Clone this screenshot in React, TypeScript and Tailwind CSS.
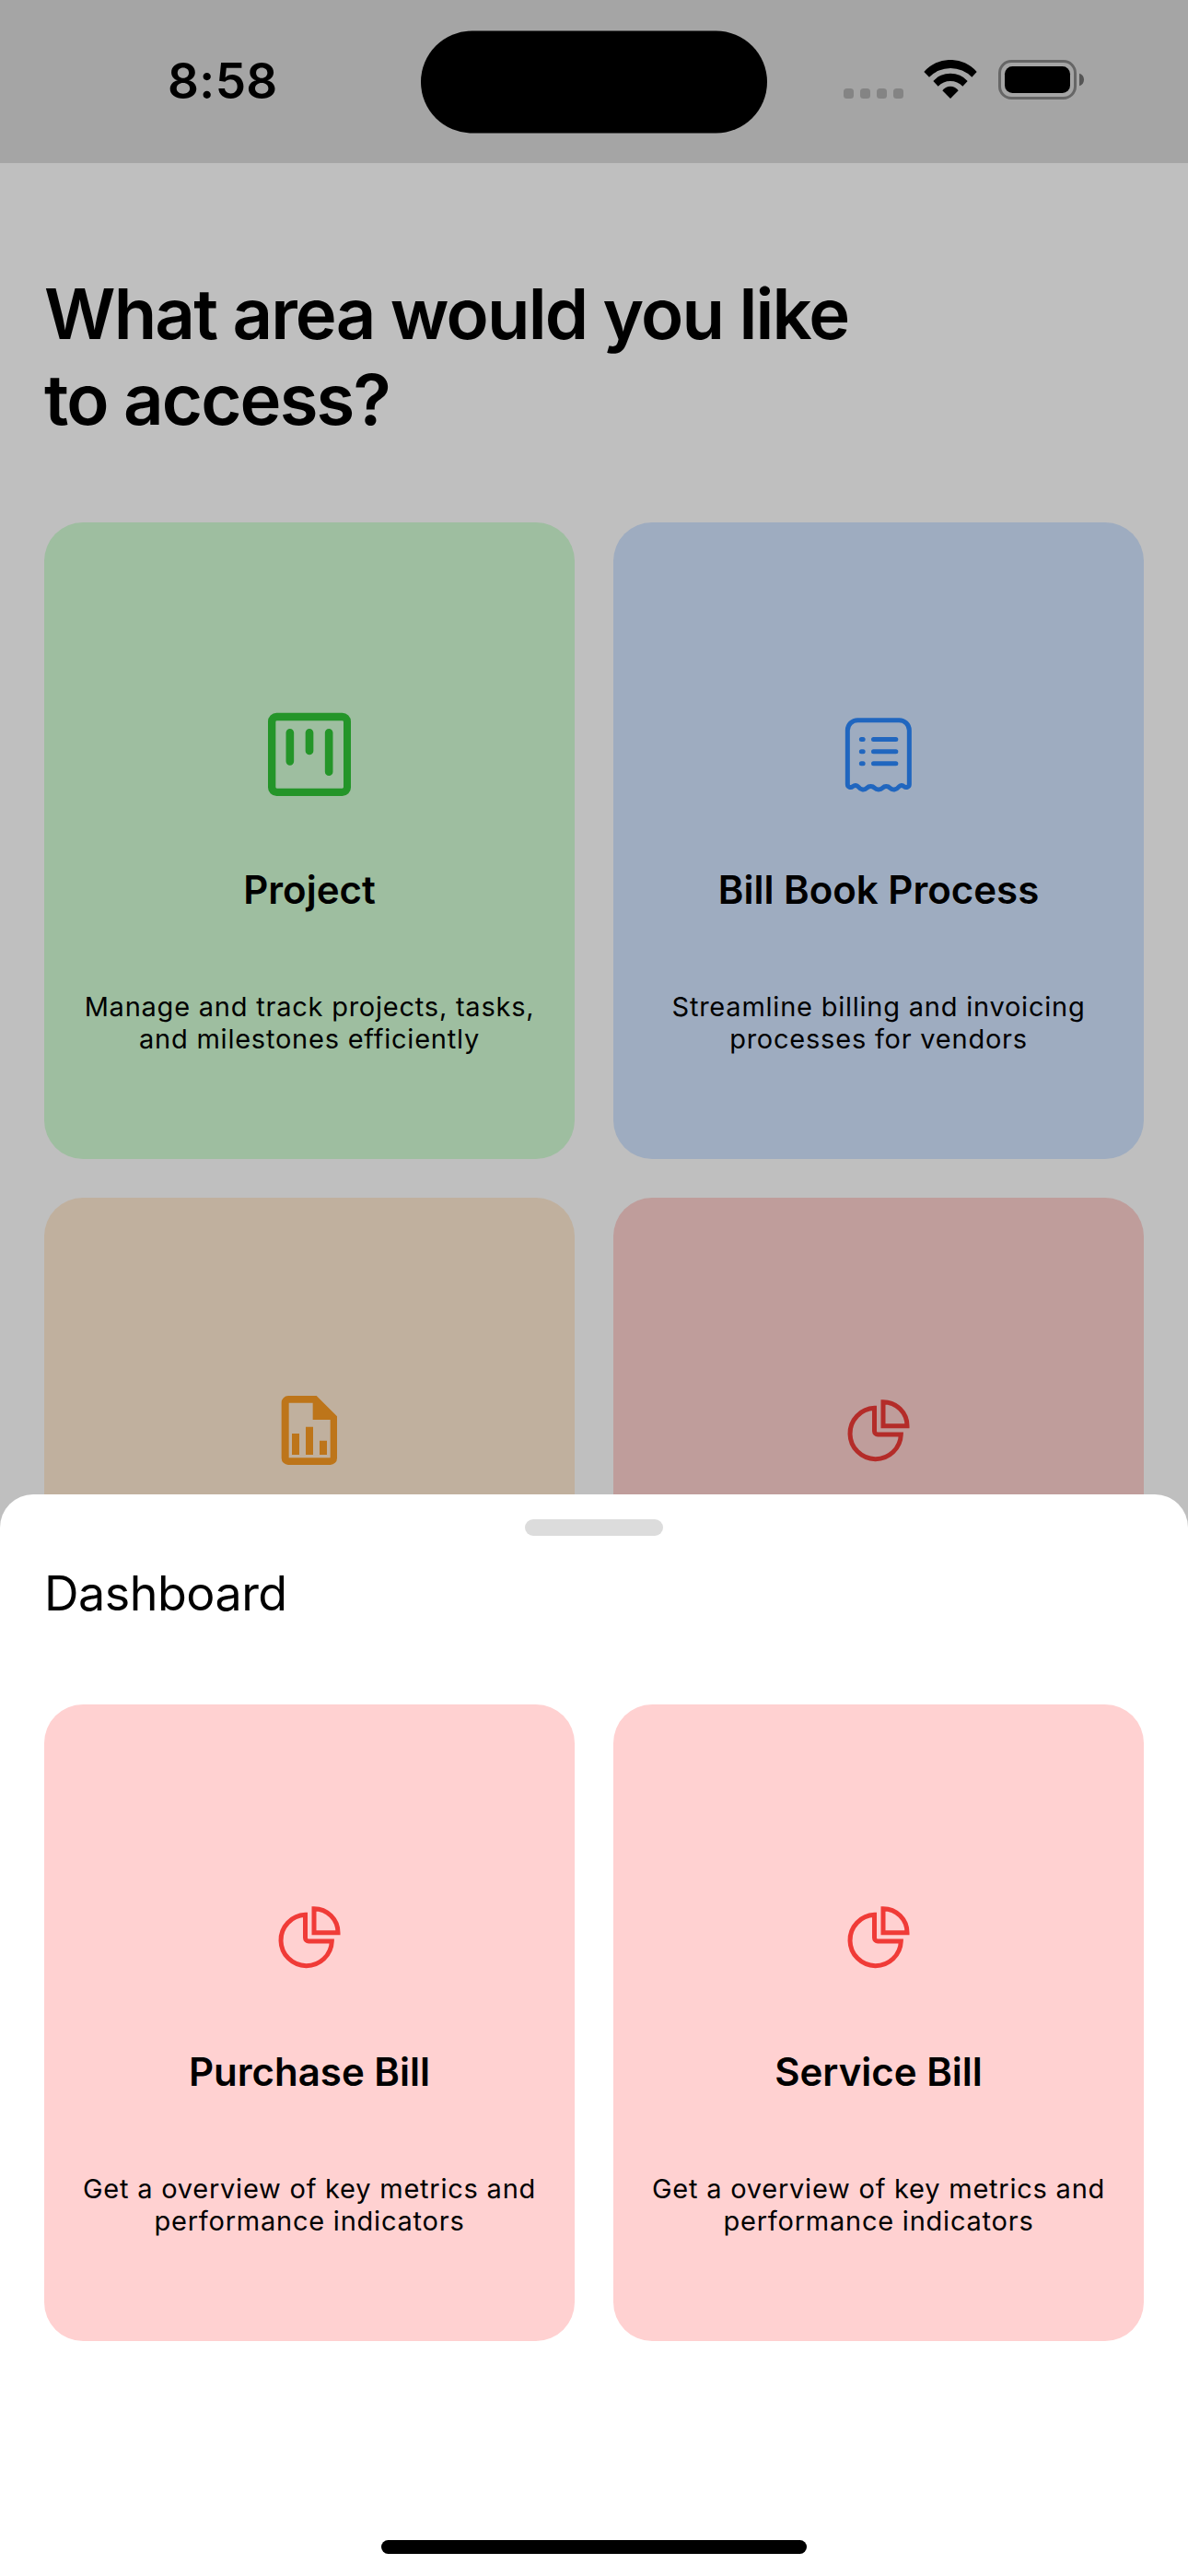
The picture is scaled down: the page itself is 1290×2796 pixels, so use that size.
import React from "react";

function ProjectIcon() {
  return (
    <svg className="size-[100px]" viewBox="78 87 300 300" fill="none" stroke="#249529" strokeWidth="26" strokeLinecap="round">
      <path fill="#249529" stroke="none" fillRule="evenodd" d="M121 101H335A28 28 0 0 1 363 129V344A28 28 0 0 1 335 372H121A28 28 0 0 1 93 344V129A28 28 0 0 1 121 101ZM122 127Q118 127 118 131V343Q118 347 122 347H335Q339 347 339 343V131Q339 127 335 127Z" />
      <path d="M164.500 166V259M228 166V225M291.500 166V293" />
    </svg>
  );
}

function BillIcon() {
  return (
    <svg className="size-[100px]" viewBox="72 87 300 300" fill="none" stroke="#2066BF" strokeWidth="15" strokeLinecap="round" strokeLinejoin="round">
      <path d="M121 334V158A33 33 0 0 1 154 125H289A33 33 0 0 1 322 158V334C322 344 311 346 305 341C300 336 293 336 288 342C280 352 267 354 259 346C252 339 242 339 235 346C228 353 216 353 209 346C202 339 191 339 184 346C176 354 164 352 156 342C151 336 144 336 138 341C132 346 121 344 121 334Z" />
      <path d="M166 187.500H171.500M166 227H171.500M166 266H171.500M205.500 187.500H278.500M205.500 227H278.500M205.500 266H278.500" />
    </svg>
  );
}

function ReportIcon() {
  return (
    <svg className="size-[100px]" viewBox="78 66 300 300" fill="#BD751A">
      <path fillRule="evenodd" d="M159 105H251L318 172V308A22 22 0 0 1 296 330H159A22 22 0 0 1 137 308V127A22 22 0 0 1 159 105ZM161 128V307H296V183H239V128Z" />
      <path d="M171 228H195V297H171ZM216 206H240V297H216ZM261 251H285V297H261Z" />
    </svg>
  );
}

function PieIcon({ color }: { color: string }) {
  return (
    <svg className="size-[100px]" viewBox="72 66 300 300" fill="none" stroke={color} strokeWidth="15">
      <path d="M208.500 145A83 83 0 1 0 295 231H220A11 11 0 0 1 208.500 220Z" />
      <path d="M237 125A78 78 0 0 1 315 203H237Z" />
    </svg>
  );
}

type CardProps = { bg: string; icon: React.ReactNode; title?: string; lines?: string[] };

function Card({ bg, icon, title, lines }: CardProps) {
  return (
    <div className={`flex h-[691px] flex-col items-center rounded-[42px] pt-[202px] text-center ${bg}`}>
      {icon}
      {title && <h2 className="mt-[72px] text-[42px] leading-[50px] font-semibold whitespace-nowrap">{title}</h2>}
      {lines && (
        <p className="mt-[84px] text-[29px] leading-[35px] tracking-[0.770px] whitespace-nowrap">
          {lines.map((line) => (
            <span key={line} className="block">{line}</span>
          ))}
        </p>
      )}
    </div>
  );
}

function StatusBar() {
  return (
    <header className="flex h-[177px] shrink-0 items-start bg-[#a5a5a5]">
      <div className="w-[457px] pt-[57px] pl-[182px] text-[53px] leading-[62px] font-semibold tracking-[0.400px]">8:58</div>
      <div className="mt-[33px] h-[111px] w-[376px] translate-y-[0.500px] rounded-full bg-black" />
      <div className="flex pt-[65px] pl-[83px]">
        <div className="mt-[31px] flex gap-[7px]">
          {[0, 1, 2, 3].map((n) => (
            <span key={n} className="size-[11px] rounded-[3.500px] bg-[#848484]" />
          ))}
        </div>
        <svg className="ml-[22px] h-[43px] w-[58px]" viewBox="370 75 174 129">
          <path d="M371 114A114 114 0 0 1 543 114L527 131A97 97 0 0 0 388 131Z" />
          <path d="M401 144A75 75 0 0 1 513 144L497 161A56 56 0 0 0 417 161Z" />
          <path d="M431 175A31 31 0 0 1 483 175L457 201Z" />
        </svg>
        <svg className="ml-[23px] h-[43px] w-[94px]" viewBox="612 75 282 129">
          <rect x="616.500" y="79.500" width="246" height="120" rx="38" fill="none" stroke="#666" strokeWidth="9" />
          <rect x="633" y="96" width="213" height="87" rx="25" />
          <path d="M876 119C896 124 896 155 876 160Z" fill="#555" />
        </svg>
      </div>
    </header>
  );
}

export default function App() {
  const overview = ["Get a overview of key metrics and", "performance indicators"];
  return (
    <div className="relative flex h-[2796px] w-[1290px] flex-col overflow-hidden bg-[#bfbfbf] font-['Inter',sans-serif] text-black">
      <StatusBar />
      <main className="px-12">
        <h1 className="mt-[117px] text-[76px] leading-[93px] font-semibold tracking-[-1.850px]">
          What area would you like
          <br />
          to access?
        </h1>
        <div className="mt-[87px] grid grid-cols-2 gap-[42px]">
          <Card bg="bg-[#9ebea0]" icon={<ProjectIcon />} title="Project" lines={["Manage and track projects, tasks,", "and milestones efficiently"]} />
          <Card bg="bg-[#9eacc0]" icon={<BillIcon />} title="Bill Book Process" lines={["Streamline billing and invoicing", "processes for vendors"]} />
          <Card bg="bg-[#c0b09e]" icon={<ReportIcon />} />
          <Card bg="bg-[#bf9d9b]" icon={<PieIcon color="#B42C29" />} />
        </div>
      </main>
      <section className="absolute inset-x-0 top-[1622px] bottom-0 flex flex-col rounded-t-[36px] bg-white px-12 pt-[27px]">
        <div className="h-[18px] w-[150px] self-center rounded-full bg-[#dcdcdc]" />
        <h2 className="mt-[32px] text-[52px] leading-[62px] tracking-[-0.500px]">Dashboard</h2>
        <div className="mt-[89px] grid grid-cols-2 gap-[42px]">
          <Card bg="bg-[#ffd1d1]" icon={<PieIcon color="#F03B37" />} title="Purchase Bill" lines={overview} />
          <Card bg="bg-[#ffd1d1]" icon={<PieIcon color="#F03B37" />} title="Service Bill" lines={overview} />
        </div>
        <div className="mt-auto mb-[24px] h-[15px] w-[462px] self-center rounded-full bg-black" />
      </section>
    </div>
  );
}
